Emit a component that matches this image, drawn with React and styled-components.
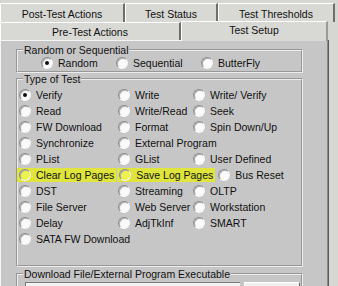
import React from 'react'
import styled, { createGlobalStyle } from 'styled-components'

const GlobalStyle = createGlobalStyle`
  html, body {
    margin: 0;
    padding: 0;
    background: #d6d6d2;
  }
`

const Window = styled.div`
  width: 338px;
  height: 286px;
  overflow: hidden;
  background: #d6d6d2;
  font-family: 'Liberation Sans', Arial, sans-serif;
  font-size: 10.5px;
  color: #111;
  padding-top: 3px;
  box-sizing: border-box;
`

const TabRow = styled.div`
  display: flex;
  height: ${(p) => p.$h}px;
  align-items: flex-end;
`

const Tab = styled.div`
  box-sizing: border-box;
  width: ${(p) => p.$w}px;
  height: ${(p) => (p.$active ? p.$h + 2 : p.$h)}px;
  margin-bottom: ${(p) => (p.$active ? -1 : 0)}px;
  position: relative;
  z-index: ${(p) => (p.$active ? 1 : 0)};
  display: flex;
  align-items: center;
  justify-content: center;
  padding-bottom: ${(p) => (p.$active ? 4 : 0)}px;
  padding-top: ${(p) => (p.$active ? 0 : 1)}px;
  background: #d8d8d4;
  border-top: 1px solid #fff;
  border-left: 1px solid #fff;
  border-right: 2px solid ${(p) => (p.$active ? '#9a9a96' : '#6e6e6a')};
  white-space: nowrap;
`

const Panel = styled.div`
  box-sizing: border-box;
  width: 328px;
  height: 260px;
  background: #c6c6c6;
  border-top: 1px solid #f4f4f4;
  border-left: 1px solid #f4f4f4;
  border-right: 1px solid #8a8a8a;
  box-shadow: 1px 0 0 #5a5a5a;
  padding: 3px 0 0 15px;
  display: flex;
  flex-direction: column;
`

const Group = styled.fieldset`
  box-sizing: border-box;
  width: 287px;
  margin: 0;
  margin-top: ${(p) => p.$mt || 0}px;
  padding: ${(p) => p.$pad || '0'};
  border: 2px groove #ececec;
  min-width: 0;
`

const Legend = styled.legend`
  padding: 0 1px;
  margin-left: 5px;
  line-height: 12px;
`

const Row = styled.div`
  display: flex;
  align-items: center;
  height: ${(p) => p.$h || 16}px;
  padding-left: ${(p) => p.$pl || 1}px;
`

const Option = styled.label`
  display: flex;
  align-items: center;
  box-sizing: border-box;
  flex: none;
  width: ${(p) => (p.$w ? `${p.$w}px` : 'auto')};
  height: 14px;
  white-space: nowrap;
  background: ${(p) => (p.$hl ? '#dfe53c' : 'transparent')};
  margin-left: ${(p) => (p.$hl ? -2 : 0)}px;
  padding: ${(p) => (p.$hl ? '0 2px' : '0')};
  margin-right: ${(p) => p.$mr || 0}px;
`

const Radio = styled.span`
  box-sizing: border-box;
  width: 12px;
  height: 12px;
  flex: none;
  border-radius: 50%;
  margin-right: 5px;
  background: ${(p) => (p.$hl ? '#eef24e' : '#fafafa')};
  border: 1px solid;
  border-color: #8c8c8c #f4f4f4 #f4f4f4 #8c8c8c;
  box-shadow: inset 1px 1px 0 #b0b0b0;
  display: flex;
  align-items: center;
  justify-content: center;
  &::after {
    content: '';
    width: 4px;
    height: 4px;
    border-radius: 50%;
    background: ${(p) => (p.$checked ? '#111' : 'transparent')};
  }
`

const Field = styled.div`
  display: flex;
  gap: 4px;
  padding: 2px 0 0 7px;
`

const TextBox = styled.div`
  width: 214px;
  height: 18px;
  background: #f2f2f2;
  border-top: 1px solid #7a7a7a;
  border-left: 1px solid #7a7a7a;
`

const Browse = styled.div`
  width: 54px;
  height: 18px;
  background: #f0f0ec;
  border-top: 1px solid #fff;
  border-left: 1px solid #fff;
  border-right: 1px solid #6a6a6a;
`

const Opt = ({ label, w, checked, hl, mr }) => (
  <Option $w={w} $hl={hl} $mr={mr}>
    <Radio $checked={checked} $hl={hl} />
    {label}
  </Option>
)

const rows = [
  [['Verify', true], ['Write'], ['Write/ Verify']],
  [['Read'], ['Write/Read'], ['Seek']],
  [['FW Download'], ['Format'], ['Spin Down/Up']],
  [['Synchronize'], ['External Program']],
  [['PList'], ['GList'], ['User Defined']],
  null,
  [['DST'], ['Streaming'], ['OLTP']],
  [['File Server'], ['Web Server'], ['Workstation']],
  [['Delay'], ['AdjTkInf'], ['SMART']],
  [['SATA FW Download']],
]

const colW = [99, 75]

const App = () => (
  <Window>
    <GlobalStyle />
    <TabRow $h={19}>
      <Tab $w={125} $h={19}>Post-Test Actions</Tab>
      <Tab $w={93} $h={19}>Test Status</Tab>
      <Tab $w={117} $h={19}>Test Thresholds</Tab>
    </TabRow>
    <TabRow $h={18}>
      <Tab $w={181} $h={18}>Pre-Test Actions</Tab>
      <Tab $w={147} $h={18} $active>Test Setup</Tab>
    </TabRow>
    <Panel>
      <Group $pad="0 0 1px 0">
        <Legend>Random or Sequential</Legend>
        <Row $h={14} $pl={23}>
          <Opt label="Random" w={75} checked />
          <Opt label="Sequential" w={85} />
          <Opt label="ButterFly" />
        </Row>
      </Group>
      <Group $pad="2px 0 18px 0">
        <Legend>Type of Test</Legend>
        {rows.map((r, i) =>
          r ? (
            <Row key={i}>
              {r.map(([label, checked], j) => (
                <Opt key={label} label={label} checked={checked} w={colW[j]} />
              ))}
            </Row>
          ) : (
            <Row key={i}>
              <Opt label="Clear Log Pages" hl mr={3} />
              <Opt label="Save Log Pages" hl mr={3} />
              <Opt label="Bus Reset" />
            </Row>
          )
        )}
      </Group>
      <Group $pad="0" $mt={1}>
        <Legend>Download File/External Program Executable</Legend>
        <Field>
          <TextBox />
          <Browse />
        </Field>
      </Group>
    </Panel>
  </Window>
)

export default App
